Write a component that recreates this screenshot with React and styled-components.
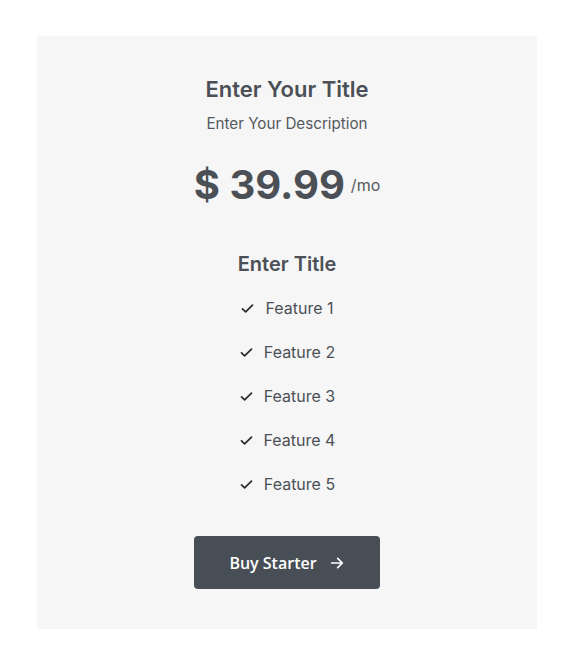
import React from "react";
import styled, { createGlobalStyle } from "styled-components";

const Global = createGlobalStyle`
  html, body { margin: 0; padding: 0; background: #ffffff; }
  body { font-family: Inter, "Noto Sans", sans-serif; }
`;

const Page = styled.div`
  padding: 36px 36px 39px 37px;
`;

const Card = styled.div`
  width: 500px;
  box-sizing: border-box;
  background: #f6f6f6;
  padding: 39px 0 40px;
  display: flex;
  flex-direction: column;
  align-items: center;
  color: #4b5056;
`;

const Title = styled.h2`
  margin: 0;
  font-size: 22px;
  line-height: 28px;
  font-weight: 600;
  color: #4b5056;
`;

const Description = styled.p`
  margin: 11px 0 0;
  font-size: 15.2px;
  line-height: 20px;
  color: #55595e;
`;

const PriceRow = styled.div`
  margin-top: 26px;
  display: flex;
  align-items: center;
  gap: 6px;
`;

const Price = styled.span`
  font-size: 40px;
  line-height: 50px;
  font-weight: 700;
  color: #4b5056;
`;

const Period = styled.span`
  font-size: 16px;
  line-height: 20px;
  color: #55595e;
`;

const SubTitle = styled.h3`
  margin: 41px 0 0;
  font-size: 20px;
  line-height: 26px;
  font-weight: 600;
  color: #4b5056;
`;

const FeatureList = styled.ul`
  list-style: none;
  margin: 9px 0 0;
  padding: 0;
  display: flex;
  flex-direction: column;
  align-items: center;
`;

const Feature = styled.li`
  height: 44px;
  display: flex;
  align-items: center;
  gap: 10px;
  font-size: 16px;
  color: #4b5056;
`;

const Button = styled.button`
  margin-top: 30px;
  width: 186px;
  height: 53px;
  border: none;
  border-radius: 4px;
  background: #474e55;
  color: #ffffff;
  font-family: "Open Sans", sans-serif;
  font-size: 16px;
  font-weight: 600;
  display: flex;
  align-items: center;
  justify-content: center;
  gap: 12px;
  cursor: pointer;
`;

const Check = () => (
  <svg width="15" height="15" viewBox="0 0 24 24" fill="none" stroke="#2a2e32" strokeWidth="2.8" strokeLinecap="round" strokeLinejoin="round">
    <path d="M4 12.5l5 5L20 6.5" />
  </svg>
);

const Arrow = () => (
  <svg width="16" height="16" viewBox="0 0 24 24" fill="none" stroke="#ffffff" strokeWidth="2.6" strokeLinecap="round" strokeLinejoin="round">
    <path d="M4 12h16M13 5l7 7-7 7" />
  </svg>
);

export default function App() {
  const features = ["Feature 1", "Feature 2", "Feature 3", "Feature 4", "Feature 5"];
  return (
    <Page>
      <Global />
      <Card>
        <Title>Enter Your Title</Title>
        <Description>Enter Your Description</Description>
        <PriceRow>
          <Price>$ 39.99</Price>
          <Period>/mo</Period>
        </PriceRow>
        <SubTitle>Enter Title</SubTitle>
        <FeatureList>
          {features.map((f) => (
            <Feature key={f}>
              <Check />
              {f}
            </Feature>
          ))}
        </FeatureList>
        <Button>
          Buy Starter
          <Arrow />
        </Button>
      </Card>
    </Page>
  );
}
